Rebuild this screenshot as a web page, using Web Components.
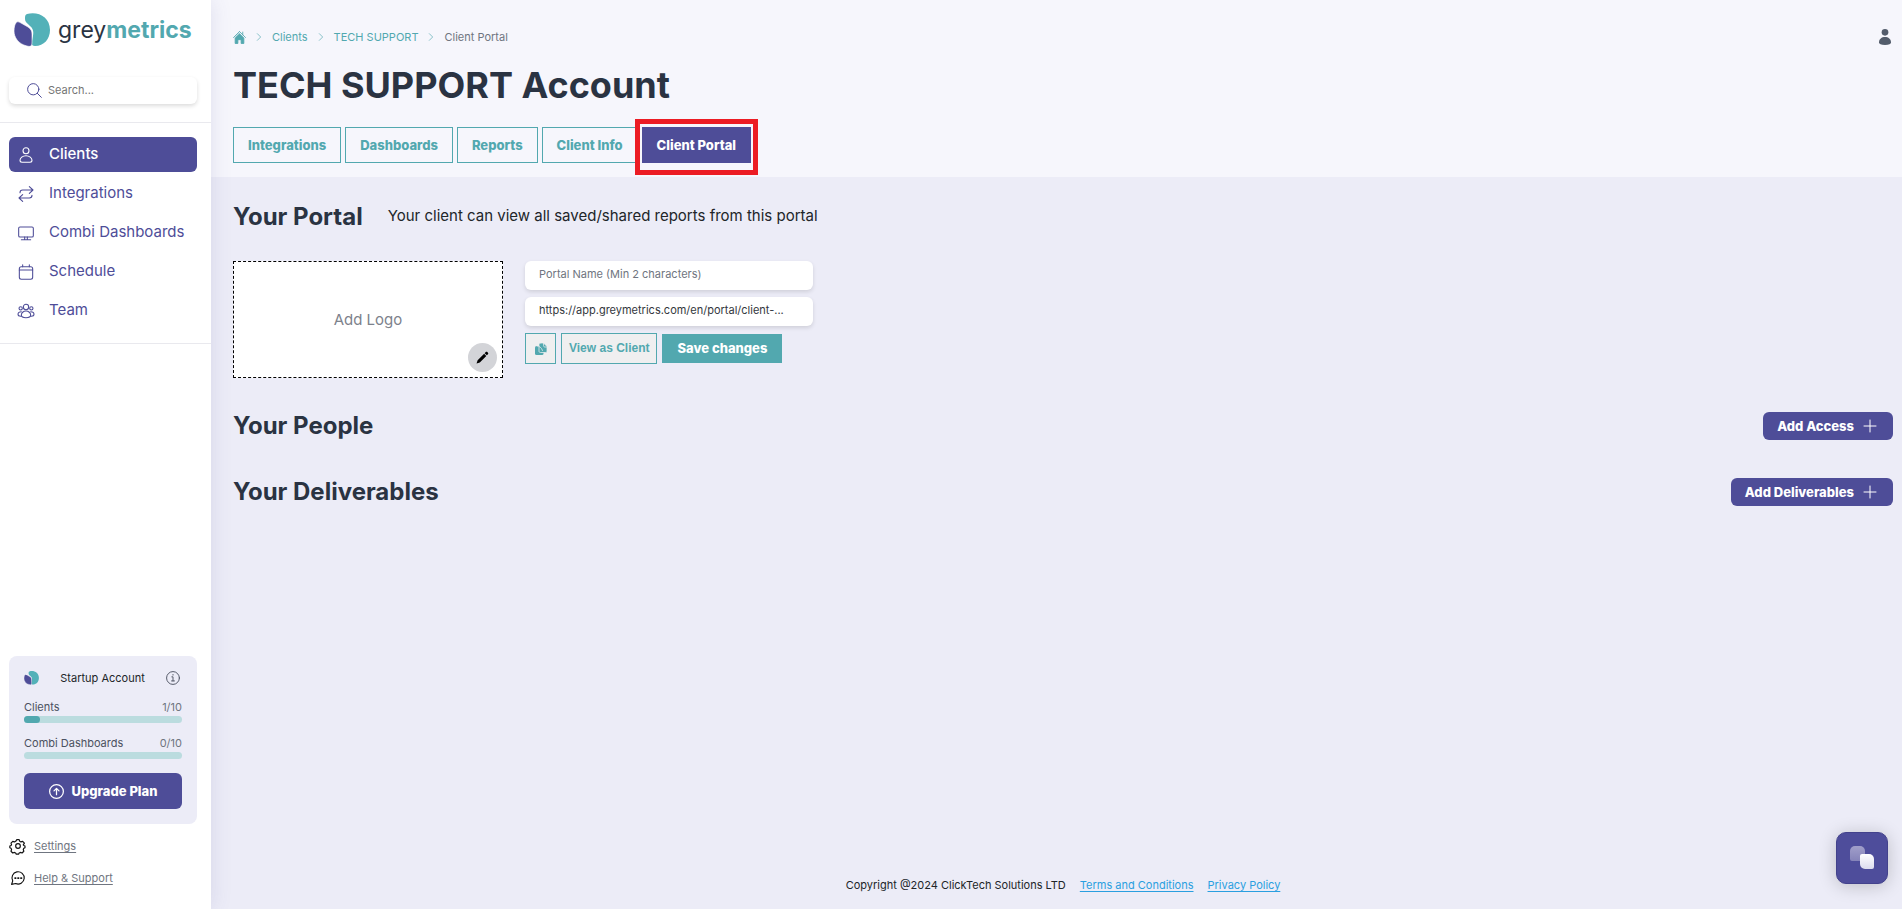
<!DOCTYPE html>
<html lang="en">
<head>
<meta charset="utf-8">
<meta name="viewport" content="width=device-width, initial-scale=1">
<title>greymetrics - Client Portal</title>
<style>
    :root {
        --purple: #4e4d98;
        --teal: #52a8af;
        --page: #ececf7;
        --header: #f6f6fc;
        --heading: #2a3342;
        --muted: #6f7580;
    }

    body {
        margin: 0;
        font-family: Inter, "Noto Sans", sans-serif;
        font-size: 15px;
        color: #212529;
        background: var(--page);
    }
</style>
</head>
<body>
<gm-app></gm-app>

<script>
const icons = {
    search: '<circle cx="10" cy="10" r="9"/><path d="M16.5 16.5l6.5 6.5"/>',
    user: '<circle cx="12" cy="5.5" r="4.5"/><path d="M12 13c-5 0-9 3.5-9 7 0 2 1 3 3 3h12c2 0 3-1 3-3 0-3.500-4-7-9-7z"/>',
    swap: '<path d="M3 10c0-2.500 1.500-4 4-4h15M17 1l5.500 5L17 11M21 14c0 2.500-1.500 4-4 4H2M7 13l-5.500 5L7 23"/>',
    monitor: '<rect x="1" y="3" width="22" height="15" rx="2"/><path d="M10 18v4M14 18v4M5 22h14"/>',
    calendar: '<rect x="2" y="4" width="20" height="19" rx="3"/><path d="M2 9h20M7 1v3M17 1v3"/>',
    team: '<circle cx="12" cy="6" r="4"/><circle cx="4" cy="8" r="2.5"/><circle cx="20" cy="8" r="2.5"/><path d="M12 12c-4 0-7 3-7 6s3 4 7 4 7-1 7-4-3-6-7-6zM5 13c-3 0-5 2-5 4 0 2 1 3 4 3M19 13c3 0 5 2 5 4 0 2-1 3-4 3"/>',
    info: '<circle cx="12" cy="12" r="11"/><path d="M10 10h2v7M9.500 17h5M12 6v1"/>',
    up: '<circle cx="12" cy="12" r="11"/><path d="M12 17V8M8 11l4-4 4 4"/>',
    gear: '<circle cx="12" cy="12" r="4"/><path d="M10 1h4l1 3 2 1 3-1 3 3-2 3 1 1 2 1v3l-2 1-1 2 1 3-3 3-3-1-2 1-1 2h-4l-1-2-2-1-3 1-3-3 1-3-1-2-2-1v-3l2-1 1-1-1-3 3-3 3 1 2-1z"/>',
    chat: '<path d="M1 23l2-6A10.500 10.500 0 1 1 8 21.500z"/><path d="M7 12h1M12 12h1M17 12h1" stroke-width="3"/>',
    chevron: '<path d="M7 2l10 10L7 22"/>',
    plus: '<path d="M12 0v24M0 12h24"/>',
    home: '<path d="M12 1L1 12M12 1l11 11M18 2v5"/><path d="M12 5l8 8v10h-5v-7H9v7H4V13z" fill="currentColor"/>',
    person: '<g fill="currentColor" stroke="none"><circle cx="12" cy="5" r="5"/><path d="M3 20c0-5 4-8 9-8s9 3 9 8c0 3-3 4-9 4s-9-1-9-4z"/></g>',
    pencil: '<path d="M1 23l2-6L15 5l4 4L7 21zM16 4l2-2c1-1 2-1 3 0l1 1c1 1 1 2 0 3l-2 2z" fill="currentColor" stroke="none"/>',
    copy: '<rect x="0" y="6" width="17" height="18" rx="3" fill="currentColor" stroke="none"/><path d="M10 0h7l7 7v9c0 2-1 3-3 3H11c-2 0-3-1-3-3V2c0-1 1-2 2-2z" fill="currentColor" stroke="#efeff0" stroke-width="1.5"/><path d="M17 1v4c0 2 1 3 3 3h3M4 6c5 0 9 3 11 9" stroke="#efeff0" stroke-width="1.5"/>'
};

function define(name, render) {
    customElements.define(name, class extends HTMLElement {
        constructor() {
            super();
            this.attachShadow({mode: 'open'});
        }

        connectedCallback() {
            this.shadowRoot.innerHTML = render(this);
        }
    });
}

define('gm-icon', (el) => `
    <style>
        :host { display: inline-flex; flex: none; width: 16px; height: 16px; }
        svg { width: 100%; height: 100%; overflow: visible; }
    </style>
    <svg viewBox="0 0 24 24" fill="none" stroke="currentColor" stroke-linecap="round" stroke-linejoin="round"
        stroke-width="${el.getAttribute('weight') || '1.6'}" aria-hidden="true">${icons[el.getAttribute('name')]}</svg>
`);

define('gm-mark', () => `
    <style>
        :host { display: inline-flex; flex: none; width: 36px; height: 34px; }
        svg { width: 100%; height: 100%; }
    </style>
    <svg viewBox="0 0 36 34" aria-hidden="true">
        <path d="M13 1C24-2 36 4 36 17c0 9-6 16-15 16-3 0-4-2-3-5 1-6 3-11-2-15-3-3-5-4-5-7 0-3 0-4 2-5z" fill="#53b1b8"/>
        <path d="M2 10c1-2 3-1 5 0l7 4c3 2 4 4 4 7v8c0 4-1 5-5 4C4 31 0 24 0 18c0-4 1-7 2-8z" fill="#4e4d98" stroke="#fff" stroke-width=".6"/>
    </svg>
`);

define('gm-nav-item', (el) => `
    <style>
        :host { display: block; }
        a {
            display: flex;
            align-items: center;
            gap: 15px;
            height: 35px;
            padding-left: 9px;
            border-radius: 6px;
            color: var(--purple);
            text-decoration: none;
            white-space: nowrap;
        }
        span { padding-bottom: 2px; }
        :host([active]) a { background: var(--purple); color: #fff; font-weight: 500; }
    </style>
    <a href="#"><gm-icon name="${el.getAttribute('icon')}"></gm-icon><span><slot></slot></span></a>
`);

define('gm-usage', (el) => {
    const used = Number(el.getAttribute('used'));
    const total = Number(el.getAttribute('total'));
    return `
        <style>
            :host { display: block; font-size: 11px; line-height: 17px; color: #4b5160; }
            .row { display: flex; justify-content: space-between; }
            .count { color: var(--muted); }
            .track { height: 7px; border-radius: 4px; background: #bbdcdf; }
            .fill { height: 7px; border-radius: 4px; background: var(--teal); width: ${used / total * 100}%; }
        </style>
        <div class="row"><slot></slot><span class="count">${used}/${total}</span></div>
        <div class="track"><div class="fill"></div></div>
    `;
});

define('gm-sidebar', () => `
    <style>
        :host {
            display: flex;
            flex-direction: column;
            box-sizing: border-box;
            flex: none;
            width: 211px;
            background: #fff;
            box-shadow: 0 0 20px rgba(78, 77, 152, .14);
            z-index: 1;
        }
        .brand { display: flex; align-items: center; gap: 8px; padding: 13px 14px 0; font-size: 23px; line-height: 34px; color: var(--heading); text-decoration: none; }
        .brand b { color: var(--teal); }
        .search {
            display: flex;
            align-items: center;
            gap: 6px;
            margin: 30px 14px 18px 9px;
            padding-left: 18px;
            height: 27px;
            border-radius: 6px;
            box-shadow: 0 2px 4px rgba(0, 0, 0, .14);
        }
        .search gm-icon { width: 15px; height: 15px; color: var(--purple); }
        input { flex: 1; min-width: 0; border: 0; padding: 0 0 2px; outline: 0; background: none; font: inherit; font-size: 11px; }
        input::placeholder { color: #757575; opacity: 1; }
        nav { display: flex; flex-direction: column; gap: 4px; padding: 14px 14px 15px 9px; border: solid #e9e9ee; border-width: 1px 0; }
        .plan { margin: auto 14px 0 9px; padding: 14px 15px 15px; border-radius: 8px; background: var(--page); }
        .account { display: flex; align-items: center; justify-content: space-between; height: 16px; margin-bottom: 13px; font-size: 11px; }
        .account gm-mark { width: 15px; height: 14px; }
        .account gm-icon { width: 14px; height: 14px; color: #4b5160; margin-right: 2px; }
        gm-usage + gm-usage { margin-top: 12px; }
        .upgrade {
            display: flex;
            align-items: center;
            justify-content: center;
            gap: 8px;
            width: 100%;
            height: 36px;
            margin-top: 14px;
            border: 0;
            border-radius: 6px;
            background: var(--purple);
            color: #fff;
            font: inherit;
            font-size: 13px;
            font-weight: 800;
        }
        .upgrade gm-icon { width: 15px; height: 15px; }
        .links { display: flex; flex-direction: column; gap: 16px; padding: 14px 11px 23px; font-size: 11px; line-height: 16px; }
        .links a { display: flex; align-items: center; gap: 9px; color: var(--muted); text-underline-offset: 2px; }
        .links gm-icon { width: 14px; height: 14px; color: #111; }
    </style>
    <a class="brand" href="#"><gm-mark></gm-mark><span>grey<b>metrics</b></span></a>
    <label class="search"><gm-icon name="search"></gm-icon><input type="search" placeholder="Search..." aria-label="Search"></label>
    <nav>
        <gm-nav-item icon="user" active>Clients</gm-nav-item>
        <gm-nav-item icon="swap">Integrations</gm-nav-item>
        <gm-nav-item icon="monitor">Combi Dashboards</gm-nav-item>
        <gm-nav-item icon="calendar">Schedule</gm-nav-item>
        <gm-nav-item icon="team">Team</gm-nav-item>
    </nav>
    <div class="plan">
        <div class="account"><gm-mark></gm-mark><span>Startup Account</span><gm-icon name="info"></gm-icon></div>
        <gm-usage used="1" total="10">Clients</gm-usage>
        <gm-usage used="0" total="10">Combi Dashboards</gm-usage>
        <button class="upgrade" type="button"><gm-icon name="up" weight="2"></gm-icon>Upgrade Plan</button>
    </div>
    <div class="links">
        <a href="#"><gm-icon name="gear" weight="2"></gm-icon>Settings</a>
        <a href="#"><gm-icon name="chat" weight="2"></gm-icon>Help &amp; Support</a>
    </div>
`);

define('gm-breadcrumbs', () => `
    <style>
        :host { display: flex; align-items: center; gap: 9px; height: 18px; font-size: 11px; color: var(--teal); }
        ::slotted(a) { color: inherit; text-decoration: none; }
        ::slotted(gm-icon[name="chevron"]) { width: 8px; height: 8px; }
        ::slotted(span) { color: var(--muted); }
    </style>
    <slot></slot>
`);

define('gm-tab', () => `
    <style>
        :host { display: block; position: relative; }
        a {
            display: flex;
            align-items: center;
            height: 34px;
            padding: 0 14px;
            border: 1px solid var(--teal);
            color: var(--teal);
            font-size: 13px;
            font-weight: 800;
            text-decoration: none;
            white-space: nowrap;
        }
        :host([active]) a { background: var(--purple); border-color: var(--purple); color: #fff; }
        /* frame drawn around the highlighted tab */
        :host([marked])::after {
            content: "";
            position: absolute;
            inset: -8px -7px -12px;
            border: 5px solid #ec1c24;
            pointer-events: none;
        }
    </style>
    <a href="#"><slot></slot></a>
`);

define('gm-header', () => `
    <style>
        :host { display: block; padding: 28px 9px 14px 22px; background: var(--header); }
        .top { display: flex; justify-content: space-between; align-items: center; }
        h1 { margin: 15px 0 18px; font-size: 36px; line-height: 48px; font-weight: 700; color: var(--heading); }
        .tabs { display: flex; gap: 4px; }
        .account { padding: 0; border: 0; background: none; color: #535c6b; display: flex; }
        .home { display: flex; }
        .home gm-icon { width: 13px; height: 13px; }
    </style>
    <div class="top">
        <gm-breadcrumbs>
            <a class="home" href="#" aria-label="Home"><gm-icon name="home"></gm-icon></a>
            <gm-icon name="chevron" weight="2"></gm-icon>
            <a href="#">Clients</a>
            <gm-icon name="chevron" weight="2"></gm-icon>
            <a href="#">TECH SUPPORT</a>
            <gm-icon name="chevron" weight="2"></gm-icon>
            <span>Client Portal</span>
        </gm-breadcrumbs>
        <button class="account" type="button" aria-label="Account"><gm-icon name="person"></gm-icon></button>
    </div>
    <h1>TECH SUPPORT Account</h1>
    <div class="tabs">
        <gm-tab>Integrations</gm-tab>
        <gm-tab>Dashboards</gm-tab>
        <gm-tab>Reports</gm-tab>
        <gm-tab>Client Info</gm-tab>
        <gm-tab active marked>Client Portal</gm-tab>
    </div>
`);

define('gm-section', (el) => `
    <style>
        :host { display: block; }
        header { display: flex; align-items: center; gap: 25px; min-height: 36px; }
        h2 { margin: 0; font-size: 24px; line-height: 36px; font-weight: 700; color: var(--heading); }
        ::slotted(span) { padding-bottom: 3px; }
        .action { margin-left: auto; }
    </style>
    <header>
        <h2>${el.getAttribute('heading')}</h2>
        <slot name="note"></slot>
        <div class="action"><slot name="action"></slot></div>
    </header>
    <slot></slot>
`);

define('gm-add-button', () => `
    <style>
        :host { display: block; }
        button {
            display: flex;
            align-items: center;
            gap: 10px;
            height: 28px;
            padding: 0 17px 0 14px;
            border: 0;
            border-radius: 6px;
            background: var(--purple);
            color: #fff;
            font: inherit;
            font-size: 13px;
            font-weight: 800;
        }
        gm-icon { width: 12px; height: 12px; }
    </style>
    <button type="button"><slot></slot><gm-icon name="plus" weight="2"></gm-icon></button>
`);

define('gm-portal-form', () => `
    <style>
        :host { display: flex; gap: 22px; padding-top: 26px; }
        .logo {
            position: relative;
            display: flex;
            align-items: center;
            justify-content: center;
            box-sizing: border-box;
            width: 270px;
            height: 117px;
            border: 1px dashed #000;
            background: #fff;
            color: #7d828c;
        }
        .edit {
            position: absolute;
            right: 5px;
            bottom: 5px;
            display: flex;
            align-items: center;
            justify-content: center;
            width: 29px;
            height: 29px;
            padding: 0;
            border: 0;
            border-radius: 50%;
            background: #d3d4d8;
            color: #000;
        }
        .edit gm-icon { width: 13px; height: 13px; }
        form { display: flex; flex-direction: column; gap: 7px; width: 288px; }
        input {
            box-sizing: border-box;
            width: 100%;
            height: 29px;
            padding: 0 14px 4px;
            border: 0;
            border-radius: 6px;
            background: #fff;
            box-shadow: 0 2px 4px rgba(0, 0, 0, .12);
            color: #33373d;
            font: inherit;
            font-size: 11px;
            text-overflow: ellipsis;
        }
        input::placeholder { color: #6f7580; opacity: 1; }
        .buttons { display: flex; align-items: center; gap: 5px; }
        .buttons button {
            display: flex;
            align-items: center;
            justify-content: center;
            box-sizing: border-box;
            height: 31px;
            padding: 0 7px 2px;
            border: 1px solid var(--teal);
            background: #efeff0;
            color: var(--teal);
            font: bold 12px "Liberation Sans", Arial, sans-serif;
            white-space: nowrap;
        }
        .buttons .copy { width: 31px; padding: 0; }
        .copy gm-icon { width: 12px; height: 12px; }
        .buttons .save { height: 29px; padding: 0 14px 2px; background: var(--teal); color: #fff; font-family: Inter, sans-serif; font-size: 13px; font-weight: 800; }
    </style>
    <div class="logo">
        <span>Add Logo</span>
        <button class="edit" type="button" aria-label="Edit logo"><gm-icon name="pencil"></gm-icon></button>
    </div>
    <form>
        <input type="text" placeholder="Portal Name (Min 2 characters)" aria-label="Portal name">
        <input type="text" readonly value="https://app.greymetrics.com/en/portal/client-..." aria-label="Portal link">
        <div class="buttons">
            <button class="copy" type="button" aria-label="Copy link"><gm-icon name="copy"></gm-icon></button>
            <button type="button">View as Client</button>
            <button class="save" type="button">Save changes</button>
        </div>
    </form>
`);

define('gm-footer', () => `
    <style>
        :host { display: flex; justify-content: center; gap: 14px; padding: 0 9px 15px 22px; font-size: 11px; line-height: 18px; }
        a { color: #2a9fe0; text-underline-offset: 2px; }
    </style>
    <span>Copyright @2024 ClickTech Solutions LTD</span>
    <a href="#">Terms and Conditions</a>
    <a href="#">Privacy Policy</a>
`);

define('gm-chat-button', () => `
    <style>
        :host { position: fixed; right: 14px; bottom: 25px; z-index: 2; }
        button {
            display: block;
            width: 52px;
            height: 52px;
            padding: 0;
            border: 1px solid #43428c;
            border-radius: 10px;
            background: #4e4d9b;
            box-shadow: 0 2px 18px rgba(0, 0, 0, .2);
        }
        svg { display: block; width: 50px; height: 50px; }
    </style>
    <button type="button" aria-label="Open chat">
        <svg viewBox="0 0 50 50" aria-hidden="true">
            <defs>
                <linearGradient id="back" x2="0" y2="1"><stop stop-color="#a19fca"/><stop offset="1" stop-color="#8583b9"/></linearGradient>
                <linearGradient id="front" x2="0" y2="1"><stop stop-color="#fff"/><stop offset="1" stop-color="#dcdcee"/></linearGradient>
            </defs>
            <path d="M18 13h5a5 5 0 0 1 5 5v10H15a2 2 0 0 1-2-2v-8a5 5 0 0 1 5-5z" fill="url(#back)"/>
            <path d="M25 21h7a5 5 0 0 1 5 5v8a2 2 0 0 1-2 2h-7a5 5 0 0 1-5-5v-8a2 2 0 0 1 2-2z" fill="url(#front)"/>
        </svg>
    </button>
`);

define('gm-app', () => `
    <style>
        :host { display: flex; min-height: 100vh; }
        main { display: flex; flex-direction: column; flex: 1; min-width: 0; }
        .content { display: flex; flex-direction: column; gap: 30px; padding: 22px 9px 31px 22px; }
        gm-footer { margin-top: auto; }
    </style>
    <gm-sidebar></gm-sidebar>
    <main>
        <gm-header></gm-header>
        <div class="content">
            <gm-section heading="Your Portal">
                <span slot="note">Your client can view all saved/shared reports from this portal</span>
                <gm-portal-form></gm-portal-form>
            </gm-section>
            <gm-section heading="Your People"><gm-add-button slot="action">Add Access</gm-add-button></gm-section>
            <gm-section heading="Your Deliverables"><gm-add-button slot="action">Add Deliverables</gm-add-button></gm-section>
        </div>
        <gm-footer></gm-footer>
    </main>
    <gm-chat-button></gm-chat-button>
`);
</script>
</body>
</html>
